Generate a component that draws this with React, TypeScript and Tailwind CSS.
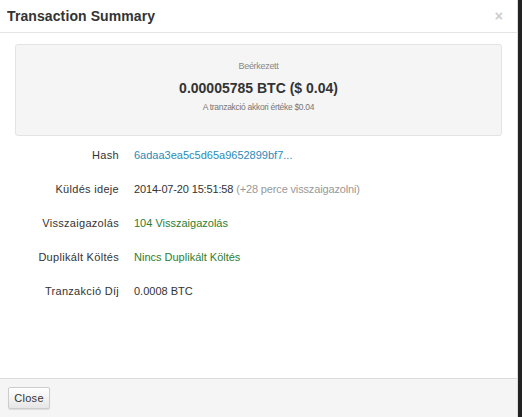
import React from "react";

export default function App() {
  const rows: { label: string; value: React.ReactNode }[] = [
    { label: "Hash", value: <span className="text-[#2a8bb8]">6adaa3ea5c5d65a9652899bf7...</span> },
    {
      label: "Küldés ideje",
      value: (
        <span className="tracking-[-0.15px] text-[#333]">
          2014-07-20 15:51:58 <span className="text-[#999]">(+28 perce visszaigazolni)</span>
        </span>
      ),
    },
    { label: "Visszaigazolás", value: <span className="text-[#2e7d32]">104 Visszaigazolás</span> },
    { label: "Duplikált Költés", value: <span className="text-[#2e7d32]">Nincs Duplikált Költés</span> },
    { label: "Tranzakció Díj", value: <span className="text-[#333]">0.0008 BTC</span> },
  ];
  return (
    <div className="flex h-[417px] w-[522px] overflow-hidden bg-[#222]" style={{ fontFamily: '"Liberation Sans", Arial, sans-serif' }}>
      <div className="flex h-full w-[518px] flex-col border-r border-[#ddd] bg-white">
        <div className="flex h-[33px] shrink-0 items-center justify-between border-b border-[#e5e5e5] pl-[7px] pr-[14px]">
          <div className="text-[14px] font-bold tracking-[0.1px] text-[#333]">Transaction Summary</div>
          <div className="text-[14px] font-bold leading-none text-[#ccc]">×</div>
        </div>
        <div className="flex-1 px-[15px] pt-[11px]">
          <div className="flex h-[92px] flex-col items-center rounded-[3px] border border-[#e3e3e3] bg-[#f5f5f5] pt-[15px]">
            <div className="text-[9px] leading-[12px] tracking-[-0.3px] text-[#888]">Beérkezett</div>
            <div className="mt-[7px] text-[14px] font-bold leading-[18px] text-[#333]">0.00005785 BTC ($ 0.04)</div>
            <div className="mt-[4px] text-[8.5px] leading-[12px] tracking-[-0.3px] text-[#777]">A tranzakció akkori értéke $0.04</div>
          </div>
          <div className="mt-[2px] flex flex-col">
            {rows.map((r) => (
              <div key={r.label} className="flex h-[34px] items-center text-[11px]">
                <div className="w-[104px] text-right tracking-[0.3px] text-[#333]">{r.label}</div>
                <div className="ml-[15px]">{r.value}</div>
              </div>
            ))}
          </div>
        </div>
        <div className="flex h-[39px] shrink-0 items-center border-t border-[#ddd] bg-[#f5f5f5] px-[8px]">
          <button className="h-[22px] w-[42px] rounded-[2px] border border-[#ccc] bg-gradient-to-b from-white to-[#e6e6e6] text-[11px] tracking-[0.3px] text-[#333] shadow-[0_1px_1px_rgba(0,0,0,0.1)]">
            Close
          </button>
        </div>
      </div>
    </div>
  );
}
